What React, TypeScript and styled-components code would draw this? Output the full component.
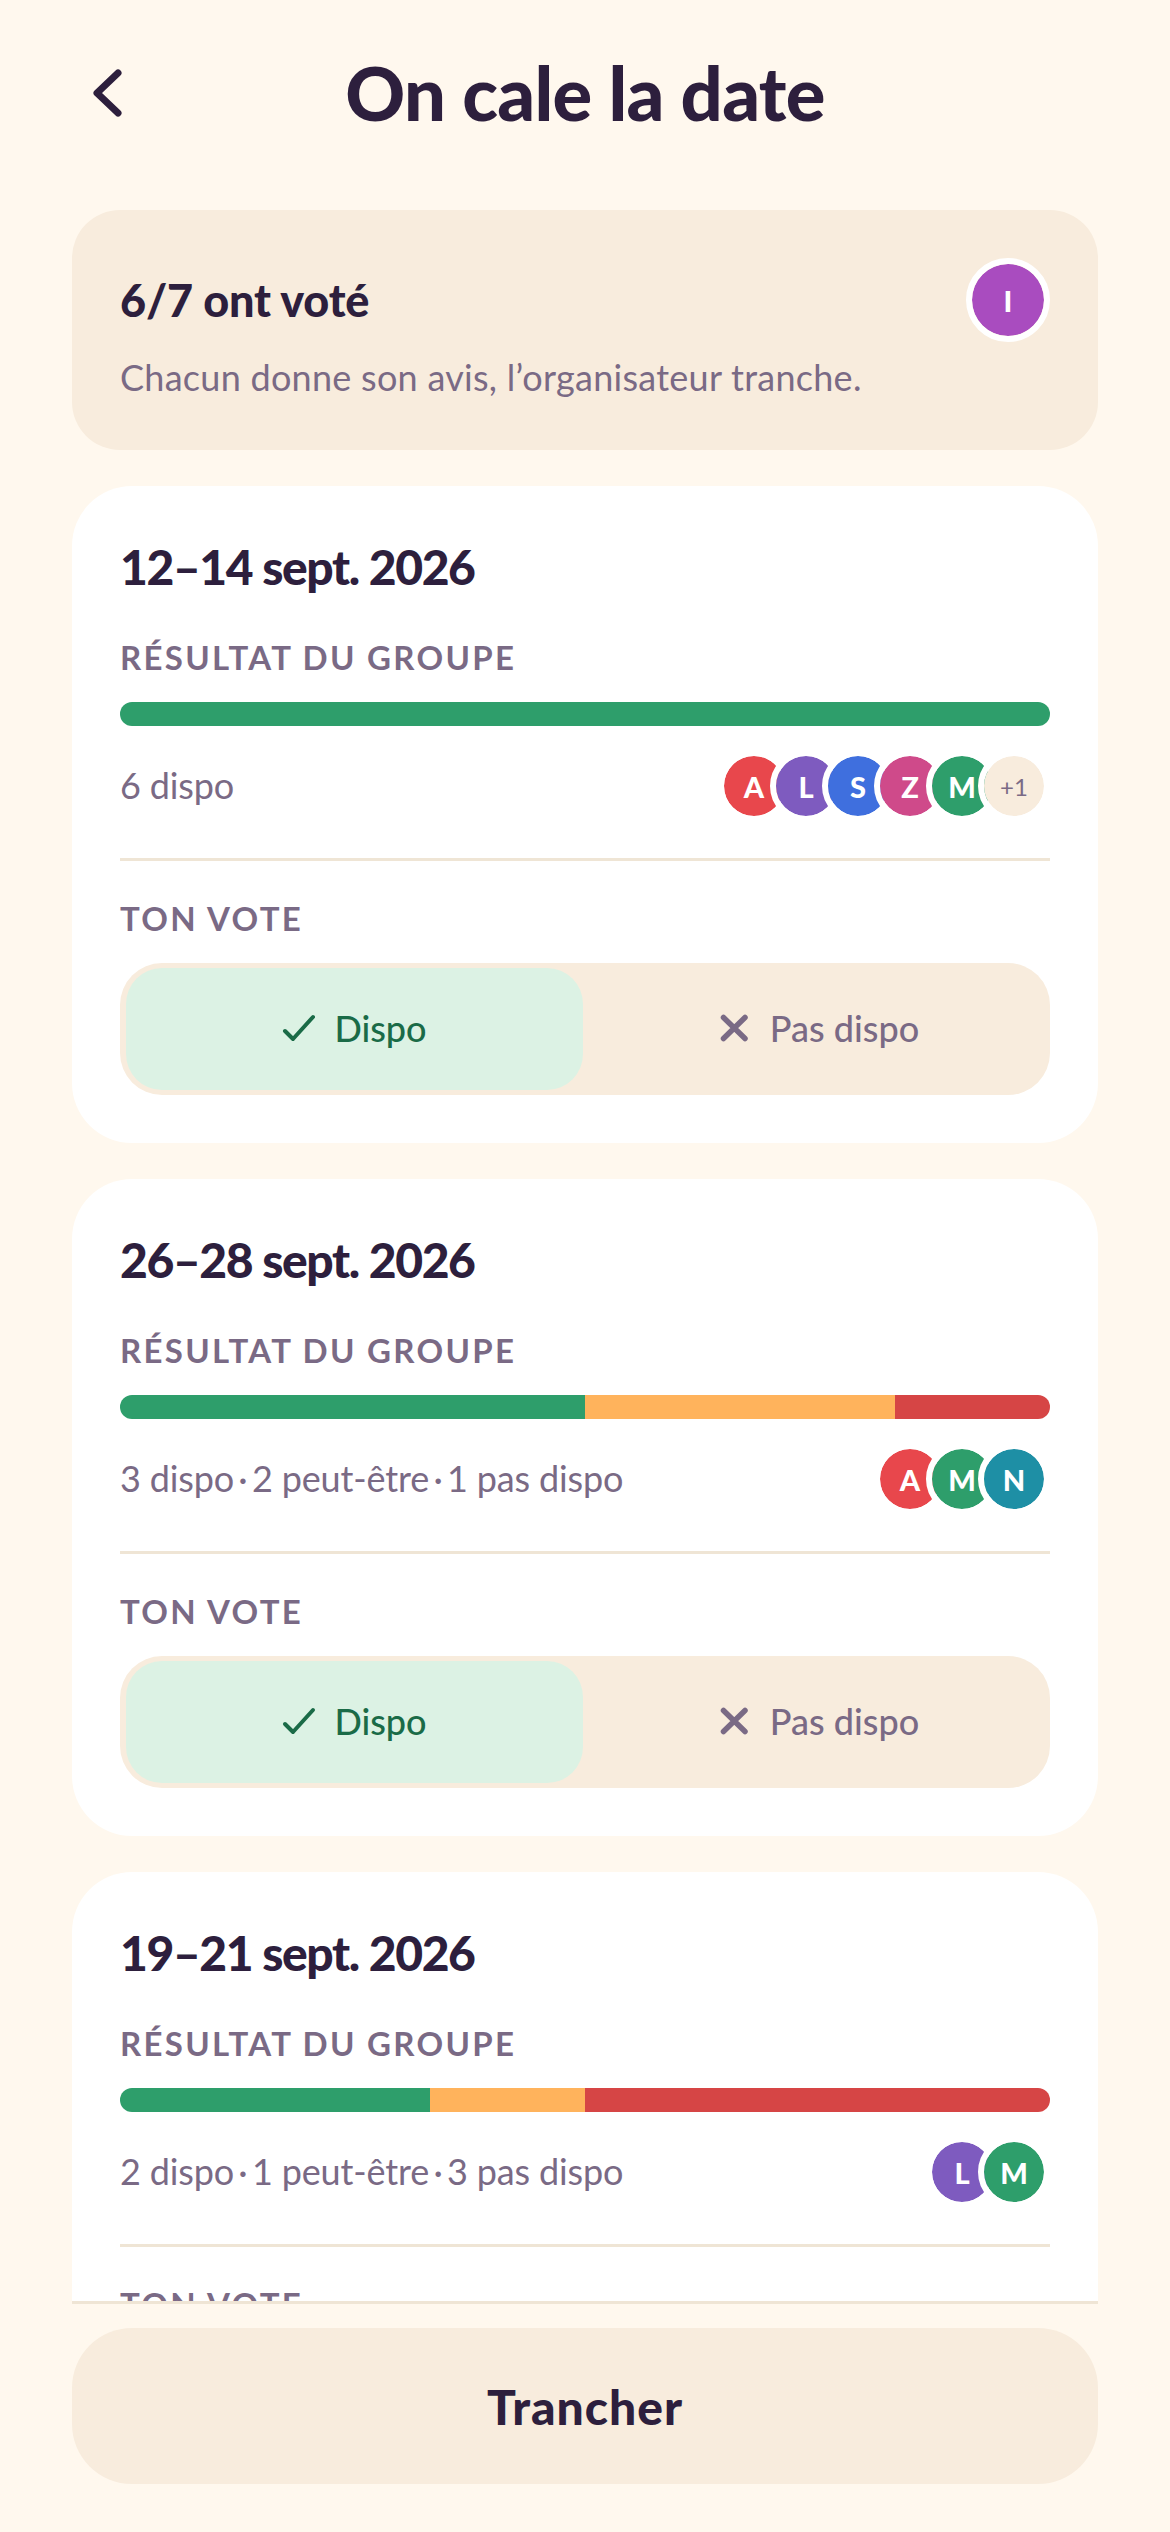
import styled, { createGlobalStyle } from "styled-components"

const INK = "#2D1F3D"
const MUTED = "#7A6A85"
const SAND = "#F8ECDD"
const LINE = "#EFE5D5"

const GlobalStyle = createGlobalStyle`
	html, body {
		margin: 0;
		padding: 0;
		background: #FFF8EE;
	}
	* {
		box-sizing: border-box;
	}
`

const Page = styled.div`
	width: 1170px;
	height: 2532px;
	display: flex;
	flex-direction: column;
	padding: 0 72px;
	background: #fff8ee;
	font-family: "Lato", "Noto Sans", sans-serif;
	color: ${INK};
	overflow: hidden;
`

const Header = styled.header`
	flex: none;
	height: 210px;
	padding-top: 45px;
	display: grid;
	grid-template-columns: 72px 1fr 72px;
	align-items: start;
`

const BackButton = styled.button`
	width: 72px;
	height: 96px;
	padding: 0 0 0 21px;
	border: 0;
	background: none;
	color: ${INK};
	display: flex;
	align-items: center;
`

const Title = styled.h1`
	margin: 0;
	height: 96px;
	line-height: 96px;
	text-align: center;
	font-size: 74px;
	font-weight: 900;
	letter-spacing: -0.7px;
`

const Scroller = styled.main`
	flex: 1;
	min-height: 0;
	overflow: hidden;
	display: flex;
	flex-direction: column;
	gap: 36px;
`

const Summary = styled.section`
	flex: none;
	height: 240px;
	padding: 48px;
	border-radius: 48px;
	background: ${SAND};
`

const SummaryTop = styled.div`
	display: flex;
	align-items: center;
	justify-content: space-between;
	margin-bottom: 12px;
`

const SummaryTitle = styled.h2`
	margin: 0;
	font-size: 45px;
	font-weight: 900;
	line-height: 84px;
	letter-spacing: -0.2px;
`

const SummaryText = styled.p`
	margin: 0;
	font-size: 36px;
	line-height: 46px;
	color: ${MUTED};
	letter-spacing: 0.27px;
`

const Card = styled.article`
	flex: none;
	height: 657px;
	padding: 48px;
	border-radius: 60px;
	background: #fff;
`

const DateTitle = styled.h3`
	margin: 0 0 36px;
	font-size: 48px;
	font-weight: 900;
	line-height: 66px;
	letter-spacing: -1.4px;
`

const Label = styled.div`
	height: 42px;
	line-height: 42px;
	font-size: 33px;
	font-weight: 700;
	letter-spacing: 2.3px;
	color: ${MUTED};
`

const Bar = styled.div`
	display: flex;
	height: 24px;
	margin: 24px 0;
	border-radius: 12px;
	overflow: hidden;
`

const BarPart = styled.div<{ $share: number; $color: string }>`
	flex: ${(props) => props.$share};
	background: ${(props) => props.$color};
`

const ResultRow = styled.div`
	display: flex;
	align-items: center;
	justify-content: space-between;
	height: 72px;
`

const Counts = styled.span`
	padding-bottom: 2px;
	font-size: 36px;
	letter-spacing: -0.15px;
	color: ${MUTED};
`

const Avatars = styled.div`
	display: flex;
`

const Avatar = styled.div<{ $color: string }>`
	width: 72px;
	height: 72px;
	border: 6px solid #fff;
	border-radius: 50%;
	background: ${(props) => props.$color};
	background-clip: padding-box;
	color: #fff;
	display: flex;
	align-items: center;
	justify-content: center;
	font-size: 29px;
	font-weight: 900;

	& + & {
		margin-left: -20px;
	}
`

const MoreAvatar = styled(Avatar)`
	color: ${MUTED};
	font-size: 24px;
	font-weight: 400;
`

const BigAvatar = styled(Avatar)`
	width: 84px;
	height: 84px;
`

const Divider = styled.hr`
	height: 3px;
	margin: 36px 0;
	border: 0;
	background: ${LINE};
`

const Toggle = styled.div`
	display: grid;
	grid-template-columns: 457px 1fr;
	gap: 12px;
	height: 132px;
	margin-top: 24px;
	padding: 5px 6px;
	border-radius: 42px;
	background: ${SAND};
`

const ToggleOption = styled.button<{ $active?: boolean }>`
	display: flex;
	align-items: center;
	justify-content: center;
	gap: 18px;
	border: 0;
	border-radius: 36px;
	padding: 0 0 2px;
	font-family: inherit;
	font-size: 36px;
	font-weight: 500;
	background: ${(props) => (props.$active ? "#DCF2E4" : "transparent")};
	color: ${(props) => (props.$active ? "#1A6B47" : MUTED)};
`

const Footer = styled.footer`
	flex: none;
	height: 231px;
	padding-top: 24px;
	border-top: 3px solid ${LINE};
`

const MainButton = styled.button`
	width: 100%;
	height: 156px;
	border: 0;
	border-radius: 60px;
	background: ${SAND};
	color: ${INK};
	font-family: inherit;
	font-size: 48px;
	font-weight: 900;
	letter-spacing: 1px;
`

const ChevronLeft = () => (
	<svg width="30" height="50" viewBox="0 0 30 50" fill="none">
		<path d="M25 5 L4 25 L25 45" stroke="currentColor" strokeWidth="7" strokeLinecap="round" strokeLinejoin="round" />
	</svg>
)

const CheckMark = () => (
	<svg width="34" height="28" viewBox="0 0 34 28" fill="none">
		<path d="M3 17 L11 25 L31 3" stroke="currentColor" strokeWidth="4" strokeLinecap="round" strokeLinejoin="round" />
	</svg>
)

const CrossMark = () => (
	<svg width="32" height="28" viewBox="0 0 32 28" fill="none">
		<path d="M3.5 3.5 L25 24.5 M25 3.5 L3.5 24.5" stroke="currentColor" strokeWidth="5.5" strokeLinecap="round" />
	</svg>
)

const AVATAR_COLORS: Record<string, string> = {
	A: "#E8474C",
	L: "#7E5BBF",
	S: "#3F6FDE",
	Z: "#CF4A8A",
	M: "#2E9E6B",
	N: "#1E8FA5",
}

const BAR_COLORS = ["#2E9E6B", "#FFB35C", "#D64545"]

interface DateOption {
	date: string
	votes: number[]
	counts: string
	voters: string[]
	extra?: number
}

const DATES: DateOption[] = [
	{ date: "12–14 sept. 2026", votes: [6, 0, 0], counts: "6 dispo", voters: ["A", "L", "S", "Z", "M"], extra: 1 },
	{ date: "26–28 sept. 2026", votes: [3, 2, 1], counts: "3 dispo\u2009·\u20092 peut-être\u2009·\u20091 pas dispo", voters: ["A", "M", "N"] },
	{ date: "19–21 sept. 2026", votes: [2, 1, 3], counts: "2 dispo\u2009·\u20091 peut-être\u2009·\u20093 pas dispo", voters: ["L", "M"] },
]

export default function App() {
	return (
		<Page>
			<GlobalStyle />
			<Header>
				<BackButton>
					<ChevronLeft />
				</BackButton>
				<Title>On cale la date</Title>
			</Header>
			<Scroller>
				<Summary>
					<SummaryTop>
						<SummaryTitle>6/7 ont voté</SummaryTitle>
						<BigAvatar $color="#A94CBF">I</BigAvatar>
					</SummaryTop>
					<SummaryText>Chacun donne son avis, l’organisateur tranche.</SummaryText>
				</Summary>
				{DATES.map((option) => (
					<Card key={option.date}>
						<DateTitle>{option.date}</DateTitle>
						<Label>RÉSULTAT DU GROUPE</Label>
						<Bar>
							{option.votes.map((count, index) => (
								<BarPart key={index} $share={count} $color={BAR_COLORS[index]} />
							))}
						</Bar>
						<ResultRow>
							<Counts>{option.counts}</Counts>
							<Avatars>
								{option.voters.map((voter) => (
									<Avatar key={voter} $color={AVATAR_COLORS[voter]}>
										{voter}
									</Avatar>
								))}
								{option.extra && <MoreAvatar $color={SAND}>+{option.extra}</MoreAvatar>}
							</Avatars>
						</ResultRow>
						<Divider />
						<Label>TON VOTE</Label>
						<Toggle>
							<ToggleOption $active>
								<CheckMark />
								Dispo
							</ToggleOption>
							<ToggleOption>
								<CrossMark />
								Pas dispo
							</ToggleOption>
						</Toggle>
					</Card>
				))}
			</Scroller>
			<Footer>
				<MainButton>Trancher</MainButton>
			</Footer>
		</Page>
	)
}
